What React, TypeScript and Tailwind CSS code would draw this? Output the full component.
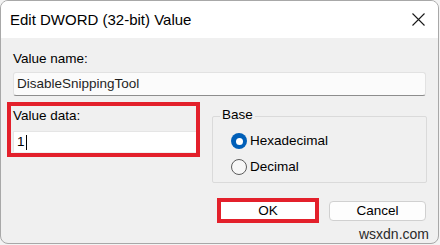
import React from 'react';

function Radio({ checked, label }: { checked?: boolean; label: string }) {
  return (
    <div className="flex items-center h-[18px]">
      {checked ? (
        <span className="w-[16px] h-[16px] rounded-full bg-[#005fb8] flex items-center justify-center">
          <span className="w-[7px] h-[7px] rounded-full bg-white" />
        </span>
      ) : (
        <span className="w-[16px] h-[16px] rounded-full border border-[#5c5c5c] bg-[#f7f7f7]" />
      )}
      <span className="ml-[3px]">{label}</span>
    </div>
  );
}

export default function App() {
  return (
    <div className="w-[440px] h-[245px] bg-[#f3f3f3] text-black font-['Liberation_Sans',Arial,sans-serif] text-[13.5px] leading-[18px]">
      <div className="relative w-[439px] h-[244px] rounded-[8px] border border-[#a8a8a8] overflow-hidden flex flex-col bg-[#f0f0f0]">
        {/* title bar */}
        <div className="h-[37px] bg-white flex items-center justify-between pl-[9px] pr-[13px] shrink-0">
          <span className="text-[15px]">Edit DWORD (32-bit) Value</span>
          <svg width="13" height="13" viewBox="0 0 13 13">
            <path d="M0.5 0.5L12.5 12.5M12.5 0.5L0.5 12.5" stroke="#1a1a1a" strokeWidth="1.1" />
          </svg>
        </div>

        {/* body */}
        <div className="flex-1 flex flex-col pt-[12px]">
          <div className="pl-[12px]">Value name:</div>
          <div className="ml-[12px] mt-[4px] w-[413px] h-[24px] bg-[#fbfbfb] border border-[#e2e2e2] border-b-[#8d8d8d] rounded-[3px] flex items-center pl-[3px] text-[#1f1f1f]">
            DisableSnippingTool
          </div>

          <div className="flex mt-[6px] pl-[6px]">
            <div className="w-[193px] h-[55px] border-[4px] border-[#e3202b] flex flex-col pt-[1px]">
              <div className="pl-[2px]">Value data:</div>
              <div className="ml-[2px] mt-[6px] h-[21px] bg-white border-t border-l border-[#e5e5e5] flex items-center pl-[3px]">
                <span>1</span>
                <span className="w-px h-[15px] bg-black ml-[1px]" />
              </div>
            </div>

            <div className="relative ml-[12px] mt-[14px] w-[215px] h-[67px] border border-[#dadada] rounded-[2px] pt-[15px] pl-[18px] flex flex-col gap-[8px]">
              <span className="absolute left-[7px] top-[-11px] px-[2px] bg-[#f0f0f0]">Base</span>
              <Radio checked label="Hexadecimal" />
              <Radio label="Decimal" />
            </div>
          </div>

          <div className="flex justify-end items-center pr-[12px] mt-[15px] gap-[10px]">
            <div className="w-[102px] h-[25px] border-[4px] border-[#e3202b] bg-white flex items-center justify-center">
              OK
            </div>
            <div className="w-[97px] h-[20px] border border-[#d0d0d0] rounded-[4px] bg-[#fdfdfd] flex items-center justify-center">
              Cancel
            </div>
          </div>
        </div>

        <span className="absolute right-[9px] bottom-[1px] text-[14px] text-[#2a2a2a] leading-[16px]">wsxdn.com</span>
      </div>
    </div>
  );
}
